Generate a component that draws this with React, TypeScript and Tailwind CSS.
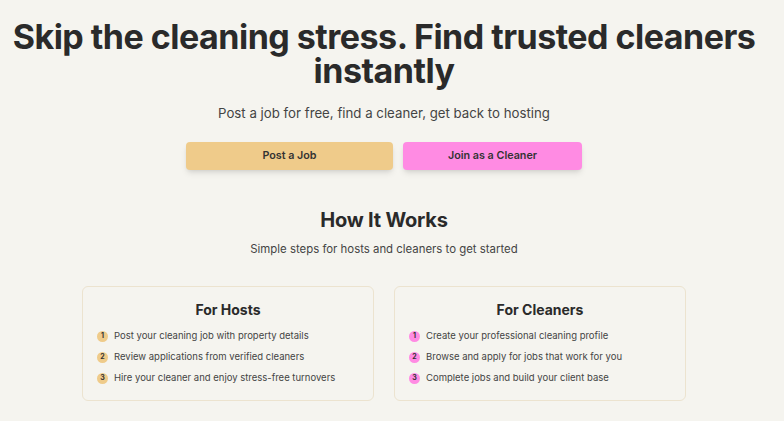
const hostSteps = [
  'Post your cleaning job with property details',
  'Review applications from verified cleaners',
  'Hire your cleaner and enjoy stress-free turnovers',
];

const cleanerSteps = [
  'Create your professional cleaning profile',
  'Browse and apply for jobs that work for you',
  'Complete jobs and build your client base',
];

interface StepCardProps {
  title: string;
  steps: string[];
  badge: string;
}

const StepCard: React.FC<StepCardProps> = ({ title, steps, badge }) => {
  return (
    <div className="w-[292px] h-[115px] rounded-md border border-[#ece3cf] px-[14px] pt-[13px]">
      <h3 className="text-center text-[14px] font-bold text-[#2a2a2a] leading-5">
        {title}
      </h3>
      <ul className="mt-[9px] space-y-[7px]">
        {steps.map((step, i) => (
          <li key={step} className="flex items-center gap-[6px]">
            <span
              className={`flex h-[11px] w-[11px] shrink-0 items-center justify-center rounded-full text-[7px] font-bold text-[#333] ${badge}`}
            >
              {i + 1}
            </span>
            <span className="whitespace-nowrap text-[9.5px] leading-[14px] text-[#444]">
              {step}
            </span>
          </li>
        ))}
      </ul>
    </div>
  );
};

export default function App() {
  return (
    <div className="min-h-[421px] w-full bg-[#f5f4ef] font-['Inter',sans-serif] text-[#2a2a2a]">
      <div className="w-[768px]">
        {/* Hero */}
        <section className="flex flex-col items-center pt-[20px]">
          <h1 className="text-center text-[34px] font-bold leading-[34px] tracking-[-0.015em]">
            Skip the cleaning stress. Find trusted cleaners
            <br />
            instantly
          </h1>
          <p className="mt-[15px] text-[13.25px] leading-5 text-[#444]">
            Post a job for free, find a cleaner, get back to hosting
          </p>
          <div className="mt-[19px] flex gap-[10px]">
            <button className="h-[28px] w-[207px] rounded-[4px] bg-[#efcb8a] text-[10.75px] font-semibold text-[#333] shadow-md">
              Post a Job
            </button>
            <button className="h-[28px] w-[179px] rounded-[4px] bg-[#ff8be3] text-[10.75px] font-semibold text-[#333] shadow-md">
              Join as a Cleaner
            </button>
          </div>
        </section>

        {/* How it works */}
        <section className="flex flex-col items-center pt-[36px]">
          <h2 className="text-[20px] font-bold leading-7 tracking-[-0.01em]">How It Works</h2>
          <p className="mt-[7px] text-[11.4px] leading-4 text-[#444]">
            Simple steps for hosts and cleaners to get started
          </p>
          <div className="mt-[29px] flex gap-[20px]">
            <StepCard title="For Hosts" steps={hostSteps} badge="bg-[#efcb8a]" />
            <StepCard title="For Cleaners" steps={cleanerSteps} badge="bg-[#ff8be3]" />
          </div>
        </section>
      </div>
    </div>
  );
}
